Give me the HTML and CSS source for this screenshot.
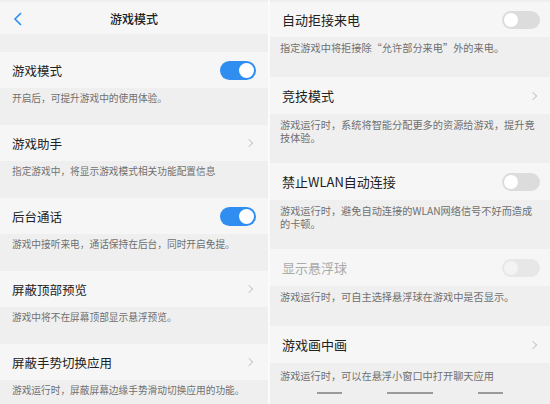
FILE: index.html
```html
<!DOCTYPE html>
<html lang="zh-CN">
<head>
  <meta charset="UTF-8" />
  <meta name="viewport" content="width=device-width, initial-scale=1.0" />
  <title>游戏模式</title>
  <link rel="stylesheet" href="styles.css">
</head>
<body>
  <div class="screens">
    <div class="panel left">
      <div class="header">
        <svg class="back" width="10" height="14" viewBox="0 0 10 14"><path d="M8 1 L2 7 L8 13" fill="none" stroke="#2b8df2" stroke-width="1.6"/></svg>
        <div class="header-title">游戏模式</div>
      </div>
      <div class="band"></div>
      <div class="row">
        <span class="label">游戏模式</span>
        <span class="switch on"></span>
      </div>
      <div class="desc">开启后，可提升游戏中的使用体验。</div>
      <div class="row">
        <span class="label">游戏助手</span>
        <span class="chevron"></span>
      </div>
      <div class="desc">指定游戏中，将显示游戏模式相关功能配置信息</div>
      <div class="row">
        <span class="label">后台通话</span>
        <span class="switch on"></span>
      </div>
      <div class="desc">游戏中接听来电，通话保持在后台，同时开启免提。</div>
      <div class="row">
        <span class="label">屏蔽顶部预览</span>
        <span class="chevron"></span>
      </div>
      <div class="desc">游戏中将不在屏幕顶部显示悬浮预览。</div>
      <div class="row">
        <span class="label">屏蔽手势切换应用</span>
        <span class="chevron"></span>
      </div>
      <div class="desc">游戏运行时，屏蔽屏幕边缘手势滑动切换应用的功能。</div>
    </div>

    <div class="panel right">
      <div class="row first">
        <span class="label">自动拒接来电</span>
        <span class="switch"></span>
      </div>
      <div class="desc">指定游戏中将拒接除“允许部分来电”外的来电。</div>
      <div class="row">
        <span class="label">竞技模式</span>
        <span class="chevron"></span>
      </div>
      <div class="desc two">游戏运行时，系统将智能分配更多的资源给游戏，提升竞技体验。</div>
      <div class="row">
        <span class="label">禁止WLAN自动连接</span>
        <span class="switch"></span>
      </div>
      <div class="desc two">游戏运行时，避免自动连接的WLAN网络信号不好而造成的卡顿。</div>
      <div class="row">
        <span class="label muted">显示悬浮球</span>
        <span class="switch disabled"></span>
      </div>
      <div class="desc">游戏运行时，可自主选择悬浮球在游戏中是否显示。</div>
      <div class="row">
        <span class="label">游戏画中画</span>
        <span class="chevron"></span>
      </div>
      <div class="desc last">
        游戏运行时，可以在悬浮小窗口中打开聊天应用
        <div class="navbar">
          <span class="nav-line"></span>
          <span class="nav-line wide"></span>
          <span class="nav-line"></span>
        </div>
      </div>
    </div>
  </div>
</body>
</html>
```

FILE: styles.css
```css
body {
  margin: 0;
  background: #fbfbfb;
  font-family: "Noto Sans CJK SC", "Noto Sans", sans-serif;
  color: #222;
}
.screens {
  display: flex;
  gap: 2px;
  width: 550px;
  height: 404px;
  overflow: hidden;
}
.panel {
  background: #efefef;
  overflow: hidden;
}
.left {
  width: 268px;
}
.right {
  width: 280px;
}
.header {
  display: flex;
  align-items: center;
  justify-content: center;
  position: relative;
  height: 32px;
  margin-top: 2px;
  background: #f6f6f6;
}
.back {
  position: absolute;
  left: 13px;
  top: 10px;
}
.header-title {
  font-size: 12px;
  font-weight: 500;
  color: #222;
}
.band {
  height: 18px;
}
.row {
  display: flex;
  align-items: center;
  justify-content: space-between;
  height: 36px;
  padding: 0 12px;
  background: #f6f6f6;
}
.left .label {
  font-size: 12.5px;
}
.right .row {
  height: 37px;
  padding: 0 10px 0 12px;
}
.right .row.first {
  height: 35px;
  margin-top: 2px;
}
.right .label {
  font-size: 13px;
}
.label.muted {
  color: #aaa;
}
.desc {
  height: 37px;
  box-sizing: border-box;
  padding: 3px 12px 0;
  font-size: 9.7px;
  line-height: 14px;
  color: #707070;
}
.right .desc {
  height: 40px;
  padding: 4px 10px 0;
  font-size: 10.2px;
}
.right .desc.two {
  height: 49px;
  line-height: 13px;
}
.right .desc.last {
  height: 41px;
  padding-top: 6px;
}
.switch {
  width: 36px;
  height: 19px;
  border-radius: 10px;
  background: #dcdcdc;
  position: relative;
}
.switch::after {
  content: "";
  position: absolute;
  top: 2px;
  left: 2px;
  width: 15px;
  height: 15px;
  border-radius: 50%;
  background: #fff;
}
.switch.on {
  background: #2f8ef0;
}
.switch.on::after {
  left: auto;
  right: 2px;
}
.right .switch {
  width: 38px;
  height: 18px;
}
.right .switch::after {
  width: 14px;
  height: 14px;
}
.switch.disabled {
  background: #e7e7e7;
}
.switch.disabled::after {
  background: #f3f3f3;
}
.chevron {
  width: 5px;
  height: 5px;
  margin-right: 4px;
  border-top: 1px solid #c9c9c9;
  border-right: 1px solid #c9c9c9;
  transform: rotate(45deg);
}
.navbar {
  display: flex;
  justify-content: center;
  gap: 45px;
  margin-top: 9px;
}
.nav-line {
  width: 25px;
  height: 2px;
  background: #9a9a9a;
}
.nav-line.wide {
  width: 46px;
}
```
